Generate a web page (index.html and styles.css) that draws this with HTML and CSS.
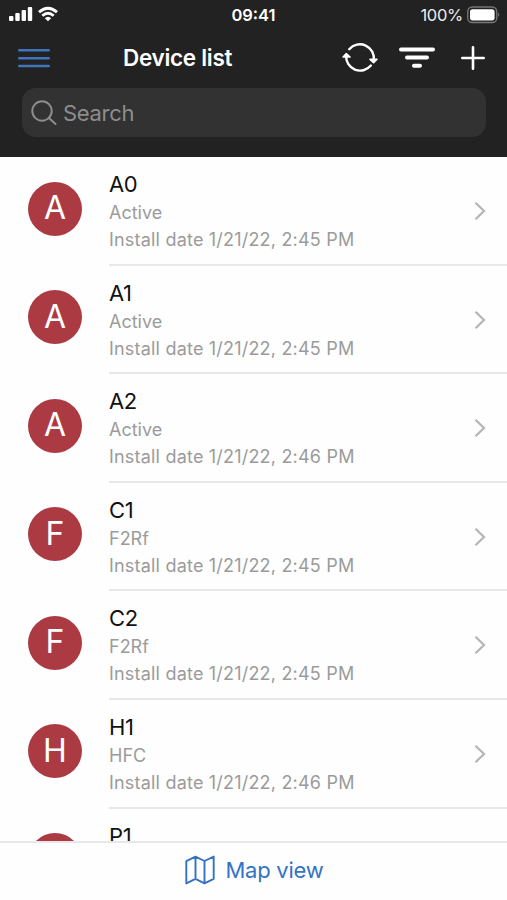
FILE: index.html
```html
<!DOCTYPE html>
<html lang="en">
<head>
<meta charset="utf-8">
<title>Device list</title>
<link rel="stylesheet" href="styles.css">
</head>
<body>
<div class="app">
  <header class="header">
    <div class="status">
      <div class="signals">
        <svg width="24" height="16" viewBox="0 0 24 16" fill="#fff"><rect y="10" width="4.4" height="5" rx="1"/><rect x="6.3" y="7" width="4.4" height="8" rx="1"/><rect x="12.6" y="4" width="4.4" height="11" rx="1"/><rect x="18.8" y="1" width="4.4" height="14" rx="1"/></svg>
        <svg width="20" height="16" viewBox="0 0 20 16" fill="none" stroke="#fff" stroke-width="2.9"><path d="M1 6.2Q10-1.8 19 6.2M4.3 9.8Q10 4.6 15.7 9.8"/><path d="M6.8 12.2Q10 9.2 13.2 12.2L10 15.3z" fill="#fff" stroke="none"/></svg>
      </div>
      <span class="time">09:41</span>
      <div class="power">
        <span class="percent">100%</span>
        <svg width="33" height="18" viewBox="0 0 33 18"><rect x=".75" y="1" width="29" height="15.5" rx="4.5" fill="none" stroke="#777" stroke-width="1.3"/><rect x="3" y="3.2" width="24.6" height="11.2" rx="2.6" fill="#fff"/><path d="M31.2 6.5q2.2 2.2 0 4.5z" fill="#777"/></svg>
      </div>
    </div>
    <nav class="nav">
      <svg class="menu" width="32" height="20" viewBox="0 0 32 20" stroke="#3f75bd" stroke-width="2.6" stroke-linecap="round"><path d="M1.3 2.3h29.4M1.3 10.2h29.4M1.3 18h29.4"/></svg>
      <h1 class="title">Device list</h1>
      <div class="actions">
        <svg width="36" height="32" viewBox="0 0 36 32" fill="none" stroke="#fff" stroke-width="2.4" stroke-linecap="round" stroke-linejoin="round"><path d="M7.2 7.2A14 14 0 0 1 31.7 18.5M4.2 13.5A14 14 0 0 0 28.9 23.6"/><path d="M28 17.3l3.6 3.3 3.4-3.3zM1.1 15l3.2-3.5L8 15z" fill="#fff" stroke-width="1.6"/></svg>
        <svg width="36" height="22" viewBox="0 0 36 22" stroke="#fff" stroke-width="4" stroke-linecap="round"><path d="M2 2.4h32M8 10.6h20M15 18.8h6"/></svg>
        <svg width="24" height="24" viewBox="0 0 24 24" stroke="#fff" stroke-width="2.6" stroke-linecap="round"><path d="M12 1.3v21.4M1.3 12h21.4"/></svg>
      </div>
    </nav>
    <div class="search">
      <svg width="26" height="26" viewBox="0 0 26 26" fill="none" stroke="#8d8d8d" stroke-width="2" stroke-linecap="round"><circle cx="11" cy="11" r="9.7"/><path d="M18 18l6.5 6"/></svg>
      <span class="hint">Search</span>
    </div>
  </header>
  <main class="list">
    <article class="row"><div class="avatar">A</div><div class="info"><h2>A0</h2><p>Active</p><p class="date">Install date 1/21/22, 2:45 PM</p></div><svg class="chevron" viewBox="0 0 12 20"><path d="M1.5 1.8 10 10l-8.5 8.2"/></svg></article>
    <article class="row"><div class="avatar">A</div><div class="info"><h2>A1</h2><p>Active</p><p class="date">Install date 1/21/22, 2:45 PM</p></div><svg class="chevron" viewBox="0 0 12 20"><path d="M1.5 1.8 10 10l-8.5 8.2"/></svg></article>
    <article class="row"><div class="avatar">A</div><div class="info"><h2>A2</h2><p>Active</p><p class="date">Install date 1/21/22, 2:46 PM</p></div><svg class="chevron" viewBox="0 0 12 20"><path d="M1.5 1.8 10 10l-8.5 8.2"/></svg></article>
    <article class="row"><div class="avatar">F</div><div class="info"><h2>C1</h2><p>F2Rf</p><p class="date">Install date 1/21/22, 2:45 PM</p></div><svg class="chevron" viewBox="0 0 12 20"><path d="M1.5 1.8 10 10l-8.5 8.2"/></svg></article>
    <article class="row"><div class="avatar">F</div><div class="info"><h2>C2</h2><p>F2Rf</p><p class="date">Install date 1/21/22, 2:45 PM</p></div><svg class="chevron" viewBox="0 0 12 20"><path d="M1.5 1.8 10 10l-8.5 8.2"/></svg></article>
    <article class="row"><div class="avatar">H</div><div class="info"><h2>H1</h2><p>HFC</p><p class="date">Install date 1/21/22, 2:46 PM</p></div><svg class="chevron" viewBox="0 0 12 20"><path d="M1.5 1.8 10 10l-8.5 8.2"/></svg></article>
    <article class="row"><div class="avatar"></div><div class="info"><h2>P1</h2></div></article>
  </main>
  <footer class="footer">
    <svg width="30" height="30" viewBox="0 0 30 30" fill="none" stroke="#3472c4" stroke-width="1.9" stroke-linejoin="round"><path d="M1.3 6.2 10.5 1.6l9 4.4 9.2-4.4v22.2L19.5 28.4l-9-4.6-9.2 4.6zM10.5 1.6v22.2M19.5 6v22.4"/></svg>
    <span class="maplabel">Map view</span>
  </footer>
</div>
</body>
</html>
```
FILE: styles.css
```css
* { box-sizing: border-box; }
body, h1, h2, p { margin: 0; font-weight: 400; }
body { font-family: Inter, "Liberation Sans", sans-serif; background: #fefefe; }
svg { display: block; flex: none; }
.app { height: 900px; display: flex; flex-direction: column; overflow: hidden; }
.header { height: 157px; flex: none; background: #222; color: #fff; }
.status { height: 30px; display: grid; grid-template-columns: 1fr auto 1fr; align-items: center; padding: 0 7px 0 9px; }
.signals { display: flex; gap: 5px; margin-top: -2px; }
.time { font-size: 16.5px; font-weight: 600; margin-left: -2px; }
.power { display: flex; justify-content: flex-end; align-items: center; gap: 4px; margin-top: -1px; }
.percent { font-size: 16.5px; letter-spacing: -.3px; padding-top: 1px; color: #eee; }
.nav { height: 56px; display: flex; align-items: center; padding: 0 22px 0 18px; }
.title { margin-left: 73px; padding-bottom: 2px; font-size: 22.5px; font-weight: 600; letter-spacing: -.3px; white-space: nowrap; }
.actions { margin-left: auto; display: flex; align-items: center; gap: 21px; }
.actions svg:last-child { margin-left: 5px; }
.search { margin: 2px 21px 0 22px; height: 49px; border-radius: 14px; background: #323232; display: flex; align-items: center; gap: 6px; padding-left: 9px; }
.hint { font-size: 22px; letter-spacing: -.3px; color: #8d8d8d; }
.list { flex: 1; min-height: 0; overflow: hidden; }
.row { height: 108.6px; display: flex; padding-left: 28px; position: relative; }
.avatar { width: 54px; height: 54px; margin-top: 24.5px; border-radius: 50%; background: #ac3a43; color: #fff; display: flex; align-items: center; justify-content: center; font-size: 32px; line-height: 54px; padding-bottom: 1px; flex: none; }
.info { margin-left: 27px; flex: 1; padding-top: 12px; border-bottom: 2px solid #e8e8e9; }
.info h2 { font-size: 22px; line-height: 30px; color: #111; letter-spacing: -.4px; }
.info p { font-size: 18px; line-height: 27px; color: #9b9b9b; white-space: nowrap; }
.info .date { letter-spacing: .2px; }
.chevron { position: absolute; right: 21px; top: 44px; width: 12px; height: 20px; fill: none; stroke: #b5b5b6; stroke-width: 2.2; }
.footer { height: 59px; flex: none; border-top: 2px solid #e8e8e9; display: flex; align-items: center; justify-content: center; gap: 10px; padding: 0 0 3px 2px; color: #3472c4; }
.maplabel { font-size: 22px; letter-spacing: -.25px; }
```
